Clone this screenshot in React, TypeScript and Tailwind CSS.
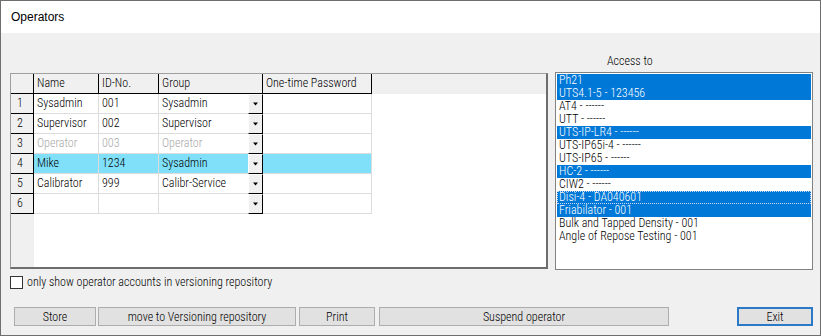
import React from "react";

const F = { fontFamily: '"Roboto Condensed", "Liberation Sans", sans-serif', fontWeight: 300 };

type Row = { n: number; name: string; id: string; group: string; dim?: boolean; hl?: boolean };

const rows: Row[] = [
  { n: 1, name: "Sysadmin", id: "001", group: "Sysadmin" },
  { n: 2, name: "Supervisor", id: "002", group: "Supervisor" },
  { n: 3, name: "Operator", id: "003", group: "Operator", dim: true },
  { n: 4, name: "Mike", id: "1234", group: "Sysadmin", hl: true },
  { n: 5, name: "Calibrator", id: "999", group: "Calibr-Service" },
  { n: 6, name: "", id: "", group: "" },
];

const access: { t: string; sel?: boolean; focus?: boolean }[] = [
  { t: "Ph21", sel: true },
  { t: "UTS4.1-5 - 123456", sel: true },
  { t: "AT4 - ------" },
  { t: "UTT - ------" },
  { t: "UTS-IP-LR4 - ------", sel: true },
  { t: "UTS-IP65i-4 - ------" },
  { t: "UTS-IP65 - ------" },
  { t: "HC-2 - ------", sel: true },
  { t: "CIW2 - ------" },
  { t: "Disi-4 - DA040601", sel: true, focus: true },
  { t: "Friabilator - 001", sel: true },
  { t: "Bulk and Tapped Density - 001" },
  { t: "Angle of Repose Testing - 001" },
];

function Arrow() {
  return (
    <svg width="7" height="4" viewBox="0 0 7 4">
      <path d="M1 0.5 H6 L3.5 3.5 Z" fill="#000" />
    </svg>
  );
}

function Grid() {
  return (
    <div className="w-[538px] h-[196px] bg-white border-t border-l border-[#a0a0a0] border-r-2 border-b-2 border-r-[#6d6d6d] border-b-[#6d6d6d] flex flex-col text-[12px] leading-[13px] text-black overflow-hidden" style={F}>
      <div className="flex h-[20px] bg-[#f0f0f0] shrink-0">
        <div className="w-[23px] h-full border-r border-b border-black" />
        <div className="w-[65px] h-full border-r border-b border-black flex items-center pl-[3px]">Name</div>
        <div className="w-[60px] h-full border-r border-b border-black flex items-center pl-[3px]">ID-No.</div>
        <div className="w-[104px] h-full border-r border-b border-black flex items-center pl-[3px]">Group</div>
        <div className="w-[109px] h-full border-r border-b border-black flex items-center pl-[3px]">One-time Password</div>
      </div>
      <div className="flex flex-1">
        <div className="w-[23px] bg-[#f0f0f0] flex flex-col shrink-0">
          {rows.map((r) => (
            <div key={r.n} className="h-[20px] border-r border-b border-black flex items-center pl-[6px]">{r.n}</div>
          ))}
        </div>
        <div className="flex flex-col">
          {rows.map((r) => {
            const bg = r.hl ? "bg-[#80e0fa]" : "bg-white";
            const col = r.dim ? "text-[#a8a8a8]" : "text-black";
            return (
              <div key={r.n} className={`flex h-[20px] ${col}`}>
                <div className={`w-[65px] h-full border-r border-b border-[#dcdcdc] flex items-center pl-[3px] ${bg}`}>{r.name}</div>
                <div className={`w-[60px] h-full border-r border-b border-[#dcdcdc] flex items-center pl-[3px] ${bg}`}>{r.id}</div>
                <div className={`w-[104px] h-full flex ${bg}`}>
                  <div className="flex-1 h-full border-b border-[#dcdcdc] flex items-center pl-[3px]">{r.group}</div>
                  <div className="w-[15px] h-full bg-[#f0f0f0] border-l border-t border-white border-r border-b border-r-black border-b-black flex items-center justify-center">
                    <Arrow />
                  </div>
                </div>
                <div className={`w-[109px] h-full border-r border-b border-[#dcdcdc] ${bg}`} />
              </div>
            );
          })}
        </div>
      </div>
    </div>
  );
}

function Btn({ w, label, focus, cls }: { w: string; label: string; focus?: boolean; cls?: string }) {
  return (
    <div className={`${w} h-[19px] bg-[#e1e1e1] flex items-center justify-center text-[12px] text-black ${focus ? "border-2 border-[#2b7ac7]" : "border border-[#adadad]"} ${cls ?? ""}`} style={F}>
      {label}
    </div>
  );
}

export default function App() {
  return (
    <div className="w-[821px] h-[336px] border border-[#6e6e6e] flex flex-col bg-[#f0f0f0] overflow-hidden">
      <div className="h-[32px] bg-white flex items-center pl-[10px] text-[12px] text-black shrink-0" style={{ fontFamily: '"Liberation Sans", sans-serif' }}>
        Operators
      </div>
      <div className="flex flex-col pl-[9px] pt-[22px]">
        <div className="flex items-start h-[215px]">
          <div className="mt-[18px]">
            <Grid />
          </div>
          <div className="ml-[7px] w-[258px] flex flex-col">
            <div className="h-[13px] pl-[52px] text-[12px] leading-[13px] text-black" style={F}>Access to</div>
            <div className="mt-[4px] h-[198px] border border-[#828282] bg-white p-[1px] flex flex-col text-[12px] leading-[13px]" style={F}>
              {access.map((a) => (
                <div
                  key={a.t}
                  className={`h-[13px] pl-[2px] whitespace-nowrap ${a.sel ? "bg-[#0078d7] text-white" : "text-black"} ${a.focus ? "outline outline-1 outline-dotted outline-[#c8d8ee] -outline-offset-1" : ""}`}
                >
                  {a.t}
                </div>
              ))}
            </div>
          </div>
        </div>
        <div className="mt-[6px] flex items-center h-[13px]">
          <div className="w-[13px] h-[13px] bg-white border border-[#333]" />
          <span className="ml-[4px] text-[12px] leading-[13px] text-black" style={F}>only show operator accounts in versioning repository</span>
        </div>
        <div className="mt-[18px] ml-[4px] flex items-center">
          <Btn w="w-[82px]" label="Store" />
          <Btn w="w-[198px]" label="move to Versioning repository" cls="ml-[2px]" />
          <Btn w="w-[76px]" label="Print" cls="ml-[3px]" />
          <Btn w="w-[290px]" label="Suspend operator" cls="ml-[4px]" />
          <Btn w="w-[76px]" label="Exit" focus cls="ml-[68px]" />
        </div>
      </div>
    </div>
  );
}
